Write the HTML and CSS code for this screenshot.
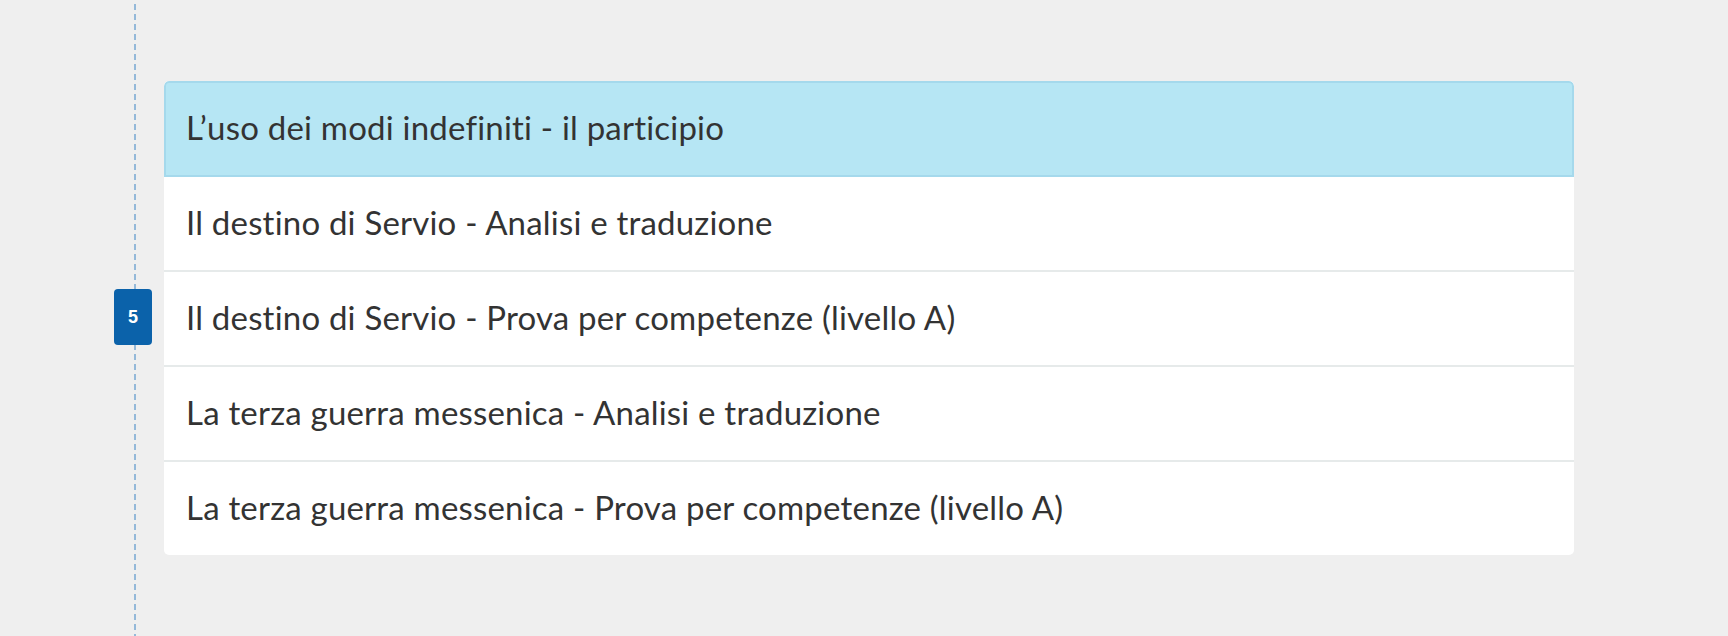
FILE: index.html
```html
<!DOCTYPE html>
<html lang="it">
<head>
<meta charset="utf-8">
<title>Lezioni</title>
<link rel="stylesheet" href="styles.css">
</head>
<body>
<div class="page">
  <div class="timeline">
    <div class="timeline-line"></div>
    <div class="badge">5</div>
  </div>
  <ul class="list">
    <li class="item item-active">L’uso dei modi indefiniti - il participio</li>
    <li class="item">Il destino di Servio - Analisi e traduzione</li>
    <li class="item">Il destino di Servio - Prova per competenze (livello A)</li>
    <li class="item">La terza guerra messenica - Analisi e traduzione</li>
    <li class="item">La terza guerra messenica - Prova per competenze (livello A)</li>
  </ul>
</div>
</body>
</html>
```
FILE: styles.css
```css
html, body {
  margin: 0;
  padding: 0;
  background: #efefef;
  height: 100%;
}
body {
  font-family: "Lato", "Open Sans", sans-serif;
  color: #333333;
}
.page {
  display: flex;
  align-items: flex-start;
  padding-top: 81px;
  padding-bottom: 81px;
  min-height: 636px;
  box-sizing: border-box;
}
.timeline {
  position: relative;
  width: 164px;
  flex: none;
  align-self: stretch;
  margin-top: -81px;
  margin-bottom: -81px;
  display: flex;
  align-items: center;
}
.timeline-line {
  position: absolute;
  left: 134px;
  top: 4px;
  bottom: 0;
  width: 2px;
  background: repeating-linear-gradient(to bottom, #94b9d9 0 6px, transparent 6px 10px);
}
.badge {
  position: relative;
  margin-left: 114px;
  margin-top: -2px;
  width: 38px;
  height: 56px;
  border-radius: 4px;
  background: #0b62aa;
  color: #ffffff;
  font-family: "Liberation Sans", Arial, sans-serif;
  font-weight: bold;
  font-size: 18px;
  display: flex;
  align-items: center;
  justify-content: center;
}
.list {
  list-style: none;
  margin: 0;
  padding: 0;
  width: 1410px;
  background: #ffffff;
  border-radius: 5px;
  overflow: hidden;
}
.item {
  height: 95px;
  box-sizing: border-box;
  padding: 0 22px 4px;
  display: flex;
  align-items: center;
  font-size: 33px;
  letter-spacing: 0.2px;
  border-bottom: 2px solid #e6eaea;
}
.item:last-child {
  border-bottom: none;
  height: 93px;
}
.item-active {
  height: 96px;
  background: #b6e6f4;
  border: 2px solid #a5d9ec;
  border-radius: 5px 5px 0 0;
  padding-left: 20px;
}
```
